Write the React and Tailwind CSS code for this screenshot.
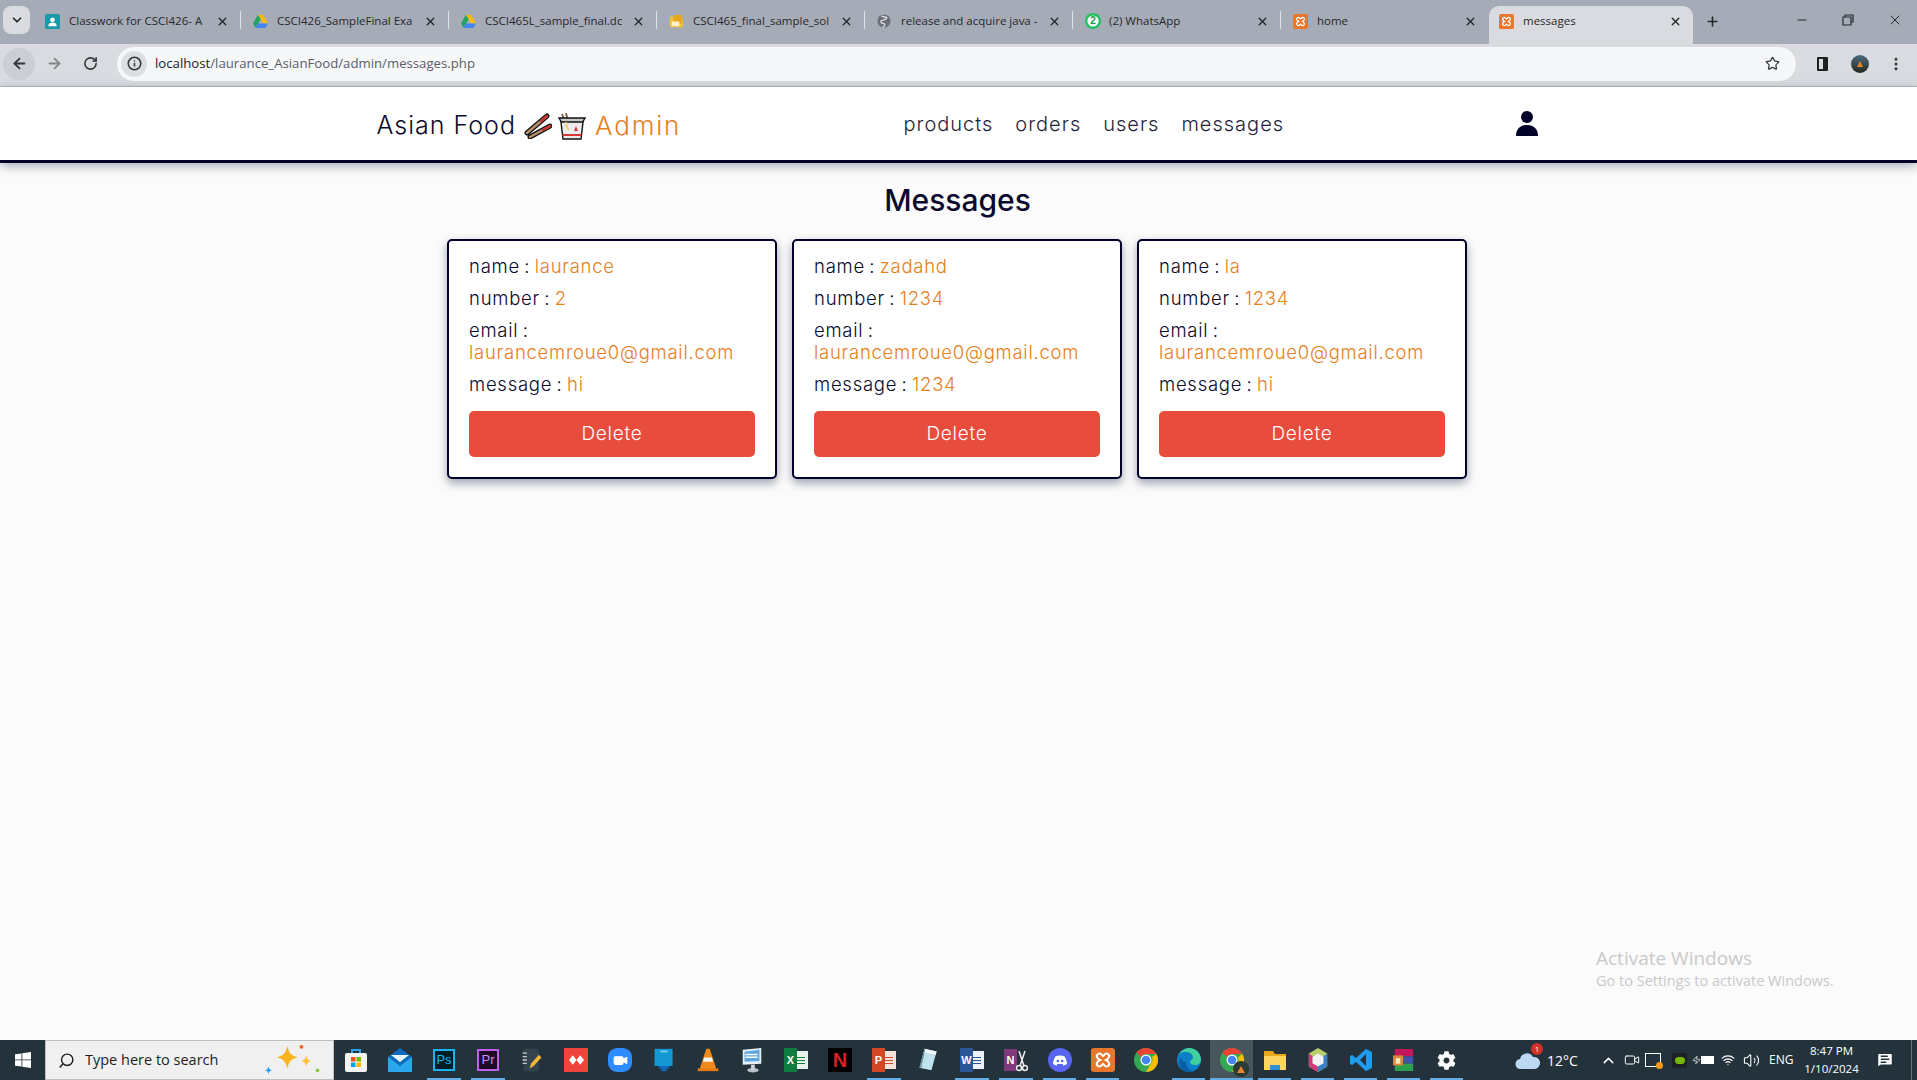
import { ArrowLeft, ArrowRight, RotateCw, Info, Star, ChevronUp, ChevronDown, Volume2, X, Plus, Minus, EllipsisVertical, Search, Video, Wifi, Zap, MessageSquareText } from "lucide-react";
import { FaCog } from "react-icons/fa";

const inkText = "text-[#0a0a2e]";
const accent = "text-[#e67e22]";

const messages = [
  { name: "laurance", number: "2", email: "laurancemroue0@gmail.com", message: "hi" },
  { name: "zadahd", number: "1234", email: "laurancemroue0@gmail.com", message: "1234" },
  { name: "la", number: "1234", email: "laurancemroue0@gmail.com", message: "hi" },
];

const Drive = () => (
  <svg viewBox="0 0 24 22" className="w-[15px] h-[14px]">
    <path d="M8 1h8l8 14h-8z" fill="#fbbc04" />
    <path d="M8 1 0 15l4 7 8-14z" fill="#1fa463" />
    <path d="M4 22h16l4-7H8z" fill="#4285f4" />
  </svg>
);

const Xampp = ({ size = "w-[15px] h-[15px]" }) => (
  <svg viewBox="0 0 24 24" className={size}>
    <rect width="24" height="24" rx="3" fill="#e9762b" />
    <path d="M7 6c3-2 4 2 5 2s2-4 5-2 0 5-2 6c2 1 5 4 2 6s-4-2-5-2-2 4-5 2 0-5 2-6C7 11 4 8 7 6z" fill="none" stroke="#fff" strokeWidth="2" />
  </svg>
);

const Classroom = () => (
  <svg viewBox="0 0 16 16" className="w-[15px] h-[15px]">
    <rect width="16" height="16" rx="2" fill="#1a9aa8" />
    <circle cx="8" cy="6" r="2.4" fill="#fff" />
    <path d="M3.5 13c0-3 2-4 4.5-4s4.5 1 4.5 4z" fill="#fff" />
  </svg>
);

const Zip = () => (
  <svg viewBox="0 0 16 16" className="w-[15px] h-[15px]">
    <path d="M1 3h5l2 2h7v9H1z" fill="#f2c23e" />
    <rect x="5" y="1" width="9" height="9" fill="#e8a81c" />
    <rect x="3" y="8" width="8" height="5" fill="#fff3c4" />
  </svg>
);

const Globe = () => (
  <svg viewBox="0 0 16 16" className="w-[14px] h-[14px]">
    <circle cx="8" cy="8" r="7.5" fill="#6b6f78" />
    <path d="M5 2c2 2 5 1 6 2S8 7 7 7 3 8 5 10s4 0 4 2-2 3-3 3" fill="none" stroke="#d9dbe0" strokeWidth="1.5" />
  </svg>
);

const Whats = () => (
  <svg viewBox="0 0 16 16" className="w-[16px] h-[16px]">
    <circle cx="8" cy="8" r="8" fill="#22c15e" />
    <circle cx="8" cy="8" r="5.6" fill="#fff" />
    <text x="8" y="11.4" textAnchor="middle" fontSize="10" fontWeight="700" fill="#15964a" fontFamily="Liberation Sans, sans-serif">2</text>
  </svg>
);

const tabs = [
  { title: "Classwork for CSCI426- A", icon: <Classroom /> },
  { title: "CSCI426_SampleFinal Exa", icon: <Drive /> },
  { title: "CSCI465L_sample_final.dc", icon: <Drive /> },
  { title: "CSCI465_final_sample_sol", icon: <Zip /> },
  { title: "release and acquire java -", icon: <Globe /> },
  { title: "(2) WhatsApp", icon: <Whats /> },
  { title: "home", icon: <Xampp /> },
];

const Chrome = ({ badge }) => (
  <div className="relative w-[24px] h-[24px]">
    <svg viewBox="0 0 24 24" className="w-[24px] h-[24px]">
      <circle cx="12" cy="12" r="12" fill="#34a853" />
      <path d="M12 0a12 12 0 0 1 10.4 6H12a6 6 0 0 0-5.2 3L2.5 4.6A12 12 0 0 1 12 0z" fill="#ea4335" />
      <path d="M22.4 6A12 12 0 0 1 12 24l5.2-9A6 6 0 0 0 18 9z" fill="#fbbc04" />
      <circle cx="12" cy="12" r="5.5" fill="#fff" />
      <circle cx="12" cy="12" r="4.3" fill="#4285f4" />
    </svg>
    {badge && (
      <span className="absolute -right-[5px] -bottom-[5px] w-[16px] h-[16px] rounded-full bg-[#2b3a35] flex items-center justify-center">
        <span className="w-0 h-0 border-l-[4px] border-r-[4px] border-b-[7px] border-l-transparent border-r-transparent border-b-[#e8842a]" />
      </span>
    )}
  </div>
);

const letterBox = "flex items-center justify-center font-['Liberation_Sans',sans-serif] font-bold text-white";

const OfficeIcon = ({ letter, dark, light, line }) => (
  <div className="relative w-[24px] h-[24px]">
    <div className={`absolute right-0 top-[3px] w-[14px] h-[18px] ${light} flex flex-col justify-center gap-[2px] px-[3px]`}>
      <span className={`h-px ${line}`} />
      <span className={`h-px ${line}`} />
      <span className={`h-px ${line}`} />
    </div>
    <div className={`${letterBox} absolute left-0 top-0 w-[13px] h-[24px] ${dark} text-[11px]`}>{letter}</div>
  </div>
);

const taskbarIcons = [
  {
    icon: (
      <svg viewBox="0 0 24 24" className="w-[24px] h-[24px]">
        <path d="M8 6V2h8v4" fill="none" stroke="#29a3e6" strokeWidth="2" />
        <rect x="1" y="5" width="22" height="19" rx="2" fill="#f4f4f4" />
        <rect x="7" y="9" width="4.5" height="4.5" fill="#f25022" />
        <rect x="12.5" y="9" width="4.5" height="4.5" fill="#7fba00" />
        <rect x="7" y="14.5" width="4.5" height="4.5" fill="#00a4ef" />
        <rect x="12.5" y="14.5" width="4.5" height="4.5" fill="#ffb900" />
      </svg>
    ),
  },
  {
    icon: (
      <svg viewBox="0 0 24 24" className="w-[24px] h-[24px]">
        <path d="M0 9 12 0l12 9v15H0z" fill="#0f6cbd" />
        <path d="M0 9l12 9 12-9v15H0z" fill="#28a8ea" />
        <path d="M3 7h18l-9 7z" fill="#e9f5fd" />
      </svg>
    ),
  },
  { on: true, icon: <div className={`${letterBox} w-[22px] h-[22px] bg-[#001d26] border-2 border-[#19b4f0] text-[13px] !font-normal !text-[#19b4f0]`}>Ps</div> },
  { on: true, icon: <div className={`${letterBox} w-[22px] h-[22px] bg-[#1c0a26] border-2 border-[#c060e8] text-[13px] !font-normal !text-[#d08cf0]`}>Pr</div> },
  {
    icon: (
      <svg viewBox="0 0 24 28" className="w-[22px] h-[24px]">
        <rect x="2" y="1" width="18" height="26" rx="3" fill="#34444e" />
        <path d="M1 6h5M1 10h5M1 14h5M1 18h5" stroke="#c9c9c9" strokeWidth="1.5" />
        <path d="M9 24l2-6 9-10 3 3-9 10z" fill="#f2b632" />
      </svg>
    ),
  },
  {
    icon: (
      <div className="w-[24px] h-[24px] bg-[#ef443b] flex items-center justify-center">
        <svg viewBox="0 0 16 10" className="w-[15px] h-[10px]">
          <path d="M4 0l4 5-4 5-4-5zM12 0l4 5-4 5-4-5z" fill="#fff" />
        </svg>
      </div>
    ),
  },
  {
    icon: (
      <div className="w-[24px] h-[24px] rounded-[9px] bg-[#2d8cff] flex items-center justify-center">
        <Video className="w-[15px] h-[15px] text-white fill-white" />
      </div>
    ),
  },
  {
    icon: (
      <svg viewBox="0 0 24 28" className="w-[22px] h-[24px]">
        <rect x="1" y="1" width="21" height="20" fill="#1597d4" />
        <rect x="8" y="3" width="8" height="2" fill="#7fd4f4" />
        <path d="M6 21h12v3H6zM9 24h6v3H9z" fill="#0f6cbd" />
      </svg>
    ),
  },
  {
    icon: (
      <svg viewBox="0 0 24 28" className="w-[22px] h-[24px]">
        <path d="M10 1h4l8 24H2z" fill="#f08a1d" />
        <path d="M7.5 11h9l1.5 5H6z" fill="#f4f4f4" />
        <path d="M0 24h24v3H0z" fill="#e57b12" />
      </svg>
    ),
  },
  {
    icon: (
      <svg viewBox="0 0 24 28" className="w-[24px] h-[26px]">
        <path d="M2 3l20-2v17L2 19z" fill="#e5edf5" />
        <path d="M4 5l16-2v12L4 16z" fill="#5da5e0" />
        <path d="M5 8h13M5 11h13" stroke="#fff" strokeWidth="1.5" />
        <ellipse cx="13" cy="25" rx="6" ry="2.5" fill="#b8c0c8" />
        <path d="M11 19h4v5h-4z" fill="#d0d6dc" />
      </svg>
    ),
  },
  { icon: <OfficeIcon letter="X" dark="bg-[#107c41]" light="bg-[#e8f2ec]" line="bg-[#107c41]" /> },
  { icon: <div className={`${letterBox} w-[24px] h-[24px] bg-black !text-[#d81f26] text-[20px]`}>N</div> },
  { on: true, icon: <OfficeIcon letter="P" dark="bg-[#d24726]" light="bg-[#f6e3dc]" line="bg-[#d24726]" /> },
  {
    icon: (
      <svg viewBox="0 0 24 28" className="w-[22px] h-[24px]">
        <path d="M8 1l14 3-6 22-14-3z" fill="#bfe3ec" />
        <path d="M8 1l14 3-1 4L7 5z" fill="#f2f7f9" />
        <path d="M2 23l6-22 1 0-5 23z" fill="#6b93a3" />
      </svg>
    ),
  },
  { on: true, icon: <OfficeIcon letter="W" dark="bg-[#2b5797]" light="bg-[#eef2f8]" line="bg-[#2b5797]" /> },
  {
    on: true,
    icon: (
      <div className="relative w-[24px] h-[24px]">
        <div className={`${letterBox} absolute left-0 top-[1px] w-[13px] h-[22px] bg-[#80397b] text-[11px]`}>N</div>
        <svg viewBox="0 0 12 24" className="absolute right-0 top-0 w-[12px] h-[24px]">
          <circle cx="3" cy="20" r="2.5" fill="none" stroke="#eee" strokeWidth="1.5" />
          <circle cx="9" cy="20" r="2.5" fill="none" stroke="#eee" strokeWidth="1.5" />
          <path d="M4 18 9 3M8 18 3 3" stroke="#eee" strokeWidth="1.5" />
        </svg>
      </div>
    ),
  },
  {
    on: true,
    icon: (
      <div className="w-[24px] h-[24px] rounded-full bg-[#5865f2] flex items-center justify-center">
        <svg viewBox="0 0 16 12" className="w-[14px] h-[11px]">
          <path d="M3 1c3-1 7-1 10 0 2 3 3 6 3 9l-4 2-1-2H5l-1 2-4-2c0-3 1-6 3-9z" fill="#fff" />
          <circle cx="5.5" cy="6.5" r="1.5" fill="#5865f2" />
          <circle cx="10.5" cy="6.5" r="1.5" fill="#5865f2" />
        </svg>
      </div>
    ),
  },
  { on: true, icon: <Xampp size="w-[24px] h-[24px]" /> },
  { icon: <Chrome /> },
  {
    on: true,
    icon: (
      <svg viewBox="0 0 24 24" className="w-[24px] h-[24px]">
        <circle cx="12" cy="12" r="12" fill="#0c7fc8" />
        <path d="M1 9C3 2 9 0 12 0c7 0 12 5 12 12 0 3-3 5-6 5s-5-1-5-3 3-2 3-5-4-5-8-5-6 2-7 5z" fill="#3fd0a0" />
        <path d="M9 14c0 5 3 8 7 9-6 3-14-2-14-9 0-2 1-4 3-5-1 2 0 3 1 4z" fill="#0a5ea8" />
      </svg>
    ),
  },
  { active: true, on: true, icon: <Chrome badge /> },
  {
    on: true,
    icon: (
      <svg viewBox="0 0 24 24" className="w-[24px] h-[24px]">
        <path d="M1 3h9l2 3h11v4H1z" fill="#e8a81c" />
        <rect x="1" y="8" width="22" height="14" fill="#fcd462" />
        <rect x="7" y="17" width="10" height="5" fill="#2d8fd8" />
      </svg>
    ),
  },
  {
    on: true,
    icon: (
      <svg viewBox="0 0 24 28" className="w-[22px] h-[26px]">
        <path d="M12 1l10 6v14l-10 6-10-6V7z" fill="#b8cf6a" />
        <path d="M2 7v14l10 6V14z" fill="#c73e7a" />
        <path d="M22 7v14l-10 6V14z" fill="#3d7ec8" />
        <path d="M12 7l6 3.5v7L12 21l-6-3.5v-7z" fill="#f2f2f2" />
      </svg>
    ),
  },
  {
    on: true,
    icon: (
      <svg viewBox="0 0 24 24" className="w-[24px] h-[24px]">
        <path d="M17 1l6 3v16l-6 3L7 14l-4 3-2-1V8l2-1 4 3z" fill="#1f9cf0" />
        <path d="M17 6l-6 6 6 6z" fill="#24313a" />
      </svg>
    ),
  },
  {
    on: true,
    icon: (
      <svg viewBox="0 0 24 24" className="w-[22px] h-[24px]">
        <rect x="2" width="20" height="8" fill="#c2185b" />
        <rect x="2" y="8" width="20" height="8" fill="#3f51b5" />
        <rect x="2" y="16" width="20" height="8" fill="#2e9e4f" />
        <rect x="0" y="7" width="11" height="11" fill="#d8843a" />
        <rect x="3" y="10" width="5" height="6" fill="#f4e8c8" />
      </svg>
    ),
  },
  { on: true, icon: <FaCog className="w-[19px] h-[19px] text-white" /> },
];

const MessageCard = ({ item }) => (
  <div className="w-[330px] h-[240px] shrink-0 bg-white border-2 border-[#02022b] rounded-[5px] shadow-[0_4px_10px_rgba(40,50,80,0.45)] px-[20px] pt-[14px]">
    <p className="leading-[22px]">
      name : <span className={accent}>{item.name}</span>
    </p>
    <p className="mt-[10px] leading-[22px]">
      number : <span className={accent}>{item.number}</span>
    </p>
    <p className="mt-[10px] leading-[22px]">
      email : <span className={accent}>{item.email}</span>
    </p>
    <p className="mt-[10px] leading-[22px]">
      message : <span className={accent}>{item.message}</span>
    </p>
    <button className="mt-[16px] w-full h-[46px] bg-[#e74c3c] rounded-[5px] text-white text-[19px]">Delete</button>
  </div>
);

export default function App() {
  return (
    <div className="relative h-screen overflow-hidden flex flex-col bg-[#fbfbfb] font-['Inter',sans-serif]">
      {/* browser tabs */}
      <div className="h-[44px] shrink-0 bg-[#a6abb8] flex items-end font-['Open_Sans',sans-serif] text-[11.5px] text-[#26282c]">
        <div className="w-[33px] shrink-0 h-full flex items-center justify-center pb-[4px]">
          <div className="w-[27px] h-[28px] rounded-[8px] bg-[#d9dbe0] flex items-center justify-center">
            <ChevronDown className="w-[14px] h-[14px]" strokeWidth={3} />
          </div>
        </div>
        {tabs.map((tab, i) => (
          <div key={tab.title} className="w-[208px] shrink-0 h-[38px] flex items-center pl-[12px] pb-[8px] relative">
            <span className="w-[24px] shrink-0 flex">{tab.icon}</span>
            <span className="w-[137px] shrink-0 overflow-hidden whitespace-nowrap">{tab.title}</span>
            <X className="w-[13px] h-[13px] ml-[10px]" strokeWidth={2.5} />
            {i < 6 && <span className="absolute right-0 top-[5px] w-px h-[18px] bg-[#e0e2e7]" />}
          </div>
        ))}
        <div className="w-[204px] shrink-0 h-[38px] bg-[#d9dbe0] rounded-t-[10px] flex items-center pl-[10px] pb-[8px]">
          <span className="w-[24px] shrink-0 flex">
            <Xampp />
          </span>
          <span className="w-[142px]">messages</span>
          <X className="w-[13px] h-[13px] ml-[4px]" strokeWidth={2.5} />
        </div>
        <div className="h-[38px] flex items-center ml-[12px] pb-[8px]">
          <Plus className="w-[15px] h-[15px]" strokeWidth={2.5} />
        </div>
        <div className="h-full flex items-center ml-[75px] gap-[33px] pb-[4px]">
          <Minus className="w-[14px] h-[14px]" />
          <svg viewBox="0 0 12 12" className="w-[12px] h-[12px]">
            <path d="M3 3V1h8v7H9M1 3h8v8H1z" fill="none" stroke="#26282c" strokeWidth="1.2" />
          </svg>
          <X className="w-[16px] h-[16px]" strokeWidth={1.5} />
        </div>
      </div>

      {/* toolbar */}
      <div className="h-[43px] shrink-0 bg-[#d9dbe0] flex items-center pb-[3px] border-b border-[#b9bbc0] text-[#33353a]">
        <div className="w-[36px] shrink-0 flex justify-center pl-[2px]">
          <div className="w-[32px] h-[32px] rounded-full bg-[#cbced4] flex items-center justify-center">
            <ArrowLeft className="w-[17px] h-[17px]" strokeWidth={2.5} />
          </div>
        </div>
        <div className="w-[36px] shrink-0 flex justify-center">
          <ArrowRight className="w-[17px] h-[17px] text-[#85878c]" strokeWidth={2.5} />
        </div>
        <div className="w-[36px] shrink-0 flex justify-center">
          <RotateCw className="w-[15px] h-[15px]" strokeWidth={2.5} />
        </div>
        <div className="ml-[9px] w-[1679px] shrink-0 h-[34px] bg-[#f6f7f9] rounded-full flex items-center pl-[4px] pr-[16px]">
          <div className="w-[26px] h-[26px] rounded-full bg-[#dcdee2] flex items-center justify-center">
            <Info className="w-[15px] h-[15px]" strokeWidth={2.5} />
          </div>
          <div className="ml-[8px] font-['Open_Sans',sans-serif] text-[13.2px] text-[#5a5d63]">
            <span className="text-[#1f2023]">localhost</span>/laurance_AsianFood/admin/messages.php
          </div>
          <Star className="w-[15px] h-[15px] ml-auto" strokeWidth={2} />
        </div>
        <div className="ml-[21px] shrink-0 w-[11px] h-[14px] border-2 border-[#1f2023] border-r-[5px] rounded-[1px]" />
        <div className="ml-[23px] shrink-0 w-[18px] h-[18px] rounded-full bg-gradient-to-b from-[#4a6a80] via-[#3a4a50] to-[#202a20] flex items-center justify-center">
          <span className="w-0 h-0 border-l-[3px] border-r-[3px] border-b-[6px] border-l-transparent border-r-transparent border-b-[#e8842a]" />
        </div>
        <EllipsisVertical className="ml-[19px] shrink-0 w-[16px] h-[16px]" strokeWidth={2.5} />
      </div>

      {/* page header */}
      <header className={`h-[76px] shrink-0 bg-white border-b-[3px] border-[#02022b] shadow-[0_3px_10px_rgba(40,50,80,0.4)] flex justify-center font-[350] ${inkText}`}>
        <div className="w-[1164px] flex items-center">
          <div className="w-[527px] shrink-0 flex items-center pt-[5px] text-[25px] tracking-[0.04em]">
            Asian Food
            <svg viewBox="0 0 28 26" className="ml-[8px] w-[28px] h-[26px]">
              <path d="M3 20 23 3M6 24 26 13" fill="none" stroke="#111" strokeWidth="5" strokeLinecap="round" />
              <path d="M3 20 23 3M6 24 26 13" fill="none" stroke="#b9906a" strokeWidth="2.4" strokeLinecap="round" />
              <path d="M17 8 23 3M19 17 26 13" fill="none" stroke="#c8322e" strokeWidth="2.4" strokeLinecap="round" />
            </svg>
            <svg viewBox="0 0 28 27" className="ml-[6px] w-[28px] h-[27px]">
              <path d="M4 1l3 8M8 0l2 9" stroke="#7a5a3a" strokeWidth="1.8" />
              <path d="M1 5h26l-3 5H4z" fill="#c9c9c9" stroke="#111" strokeWidth="1.4" />
              <path d="M3 9h22l-2 17H5z" fill="#ededed" stroke="#111" strokeWidth="1.4" />
              <path d="M8 9c0 4 1 6 3 8" fill="none" stroke="#f0d060" strokeWidth="1.6" />
              <path d="M4.5 21h19v2h-19z" fill="#d8343a" />
              <path d="M18 13l2 5h-4z" fill="#d8343a" />
            </svg>
            <span className={`ml-[9px] -mt-[2px] text-[26px] tracking-[0.07em] ${accent}`}>Admin</span>
          </div>
          <nav className="flex items-center gap-[22px] text-[20px] tracking-[0.05em] text-[#1f1f3a]">
            <span>products</span>
            <span>orders</span>
            <span>users</span>
            <span>messages</span>
          </nav>
          <svg viewBox="0 0 22 25" className="ml-auto mr-[3px] w-[22px] h-[25px]">
            <circle cx="11" cy="6" r="6" fill="#02022b" />
            <path d="M0 25c0-7 4-11 11-11s11 4 11 11z" fill="#02022b" />
          </svg>
        </div>
      </header>

      {/* messages */}
      <main className="flex-1 flex flex-col items-center">
        <h1 className={`mt-[15px] mr-[2px] text-[30px] leading-[44px] font-medium ${inkText}`}>Messages</h1>
        <div className={`mt-[17px] mr-[3px] flex gap-[15px] text-[18.5px] font-[350] tracking-[0.04em] [word-spacing:-1.5px] ${inkText}`}>
          {messages.map((item) => (
            <MessageCard key={item.name} item={item} />
          ))}
        </div>
      </main>

      {/* activate windows watermark */}
      <div className="absolute left-[1596px] top-[945px] font-['Open_Sans',sans-serif] text-[#c9c9c9] pointer-events-none">
        <div className="text-[19px] leading-[26px]">Activate Windows</div>
        <div className="text-[14.5px] leading-[20px]">Go to Settings to activate Windows.</div>
      </div>

      {/* taskbar */}
      <footer className="h-[40px] shrink-0 bg-[#24333b] flex items-stretch font-['Open_Sans',sans-serif] text-white">
        <div className="w-[45px] shrink-0 flex items-center justify-center">
          <svg viewBox="0 0 16 16" className="w-[16px] h-[16px]">
            <path d="M0 2.3 6.5 1.4V7.5H0zM7.3 1.3 16 0v7.5H7.3zM0 8.3h6.5v6.3L0 13.7zM7.3 8.3H16V16l-8.7-1.2z" fill="#fff" />
          </svg>
        </div>
        <div className="w-[289px] shrink-0 bg-[#f0f0f0] border border-[#bfbfbf] flex items-center pl-[12px] text-[#1f1f1f] text-[14.5px]">
          <Search className="w-[17px] h-[17px] -scale-x-100" />
          <span className="ml-[10px]">Type here to search</span>
          <svg viewBox="0 0 60 34" className="ml-auto mr-[10px] w-[60px] h-[32px]">
            <path d="M24 2c2 8 4 10 11 12-7 2-9 4-11 12-2-8-4-10-11-12 7-2 9-4 11-12z" fill="#f9b41c" />
            <path d="M44 12c1 4 2 5 5 6-3 1-4 2-5 6-1-4-2-5-5-6 3-1 4-2 5-6z" fill="#f9c23c" />
            <path d="M4 24c1 3 1 3 4 4-3 1-3 1-4 4-1-3-1-3-4-4 3-1 3-1 4-4z" fill="#2b9cf0" />
            <circle cx="39" cy="3" r="2" fill="#f0602c" />
            <circle cx="56" cy="28" r="2" fill="#8cc83c" />
          </svg>
        </div>
        {taskbarIcons.map((item, i) => (
          <div key={i} className={`relative shrink-0 flex items-center justify-center ${i < 16 ? "w-[44px]" : "w-[43px]"} ${item.active ? "bg-[#47555c]" : ""}`}>
            {item.icon}
            {item.on && <span className={`absolute bottom-0 h-[2px] bg-[#63ade6] ${item.active ? "inset-x-0" : "inset-x-[5px]"}`} />}
          </div>
        ))}
        <div className="ml-[47px] flex items-center shrink-0">
          <div className="relative w-[26px] h-[18px]">
            <svg viewBox="0 0 26 18" className="w-[26px] h-[18px]">
              <path d="M6 18a5 5 0 0 1-1-10 7 7 0 0 1 13-2 6 6 0 0 1 2 12z" fill="#bcd8f4" />
            </svg>
            <span className="absolute -top-[8px] right-[-2px] w-[12px] h-[12px] rounded-full bg-[#d3302a] text-[8px] leading-[12px] text-center">1</span>
          </div>
          <span className="ml-[6px] w-[53px] text-[14px]">12°C</span>
          <ChevronUp className="w-[17px] h-[17px]" />
          <Video className="ml-[7px] w-[16px] h-[16px]" strokeWidth={1.5} />
          <div className="relative ml-[5px] w-[16px] h-[14px] border border-white">
            <span className="absolute -right-[3px] -bottom-[3px] w-[7px] h-[7px] rounded-full bg-[#f59c1a]" />
          </div>
          <div className="ml-[11px] w-[15px] h-[15px] bg-[#1c2226] rounded-[2px] flex items-center justify-center">
            <span className="w-[10px] h-[7px] rounded-full bg-[#76b900]" />
          </div>
          <div className="ml-[5px] w-[22px] flex items-center">
            <Zap className="w-[9px] h-[12px]" strokeWidth={2} />
            <span className="w-[13px] h-[8px] bg-white" />
          </div>
          <Wifi className="ml-[7px] w-[14px] h-[14px]" />
          <Volume2 className="ml-[8px] w-[17px] h-[17px]" strokeWidth={1.5} />
          <span className="ml-[9px] w-[24px] text-[12px]">ENG</span>
          <div className="ml-[11px] w-[55px] text-[11.5px] leading-[18px] text-center whitespace-nowrap">
            <div>8:47 PM</div>
            <div>1/10/2024</div>
          </div>
          <div className="ml-[5px] w-[42px] h-[40px] flex items-center justify-center">
            <MessageSquareText className="w-[18px] h-[18px] fill-white text-[#24333b]" />
          </div>
          <span className="ml-[5px] w-px h-[40px] bg-[#6a757b]" />
        </div>
      </footer>
    </div>
  );
}
